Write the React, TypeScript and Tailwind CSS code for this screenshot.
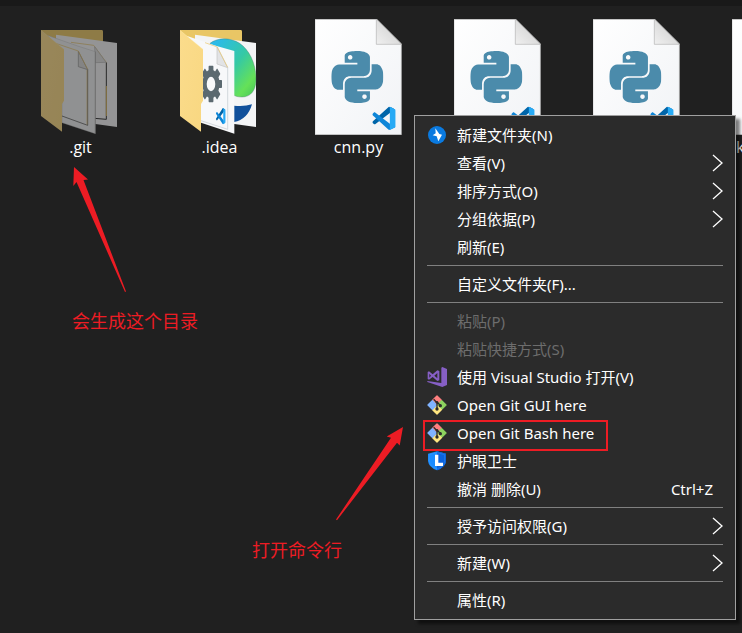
import React from "react";
import { SiPython } from "react-icons/si";

type FileItem = { name: string; kind: "git" | "idea" | "python"; clipped?: boolean };

type MenuEntry =
	| { type: "separator" }
	| {
			type: "item";
			label: string;
			icon?: React.ReactNode;
			shortcut?: string;
			submenu?: boolean;
			disabled?: boolean;
			highlighted?: boolean;
	  };

const VsCodeLogo = (props: React.SVGProps<SVGSVGElement>) => (
	<svg viewBox="0 0 100 100" {...props}>
		<path
			fill="#0065a9"
			d="M96.46 10.8 75.86.88C73.47-.27 70.62.21 68.75 2.08L1.3 63.58c-1.81 1.65-1.81 4.51 0 6.16l5.51 5.01c1.49 1.35 3.72 1.45 5.32.24L93.36 13.36C96.09 11.29 100 13.24 100 16.66v-.24c0-2.4-1.38-4.59-3.54-5.63z"
		/>
		<path
			fill="#0e86d8"
			d="M96.46 89.2 75.86 99.12c-2.39 1.15-5.24.66-7.11-1.21L1.3 36.42c-1.81-1.65-1.81-4.51 0-6.16l5.51-5.01c1.49-1.35 3.72-1.45 5.32-.24l81.23 61.63C96.09 88.71 100 86.76 100 83.34v.24c0 2.4-1.38 4.58-3.54 5.62z"
		/>
		<path
			fill="#27aaf5"
			d="M75.86 99.13c-2.39 1.15-5.24.66-7.11-1.21 2.31 2.31 6.25.67 6.25-2.59V4.67c0-3.26-3.94-4.89-6.25-2.59 1.87-1.87 4.72-2.36 7.11-1.21l20.6 9.9c2.16 1.05 3.54 3.24 3.54 5.64v67.17c0 2.4-1.38 4.59-3.54 5.63z"
		/>
	</svg>
);

const PythonFileIcon = () => (
	<svg viewBox="45 57 261 348" className="h-[116px] w-[87px]" aria-hidden="true">
		<defs>
			<linearGradient id="fold" x1="0" y1="1" x2="1" y2="0">
				<stop offset="0" stopColor="#f0f0f0" />
				<stop offset="1" stopColor="#c9c9c9" />
			</linearGradient>
			<linearGradient id="paper" x1="0" y1="0" x2="1" y2="1">
				<stop offset="0" stopColor="#ffffff" />
				<stop offset="1" stopColor="#f1f3f6" />
			</linearGradient>
		</defs>
		<path d="M45 58H230L304 131V404H45z" fill="url(#paper)" stroke="#c4c4c4" strokeWidth="2" />
		<path d="M229 57V133H304z" fill="url(#fold)" stroke="#b2b2b2" strokeWidth="2" />
		<SiPython x="94" y="153" size={156} color="#4b8bab" />
		<VsCodeLogo x="217" y="320" width="70" height="70" />
	</svg>
);

const FolderBack = () => (
	<>
		<path d="M45 90H228Q231 90 231 95V340H100L45 300z" fill="#e9c665" />
		<path d="M90 104 273 129V381L208 372 90 340z" fill="#f3f4f5" />
	</>
);

const FolderFront = () => (
	<>
		<path d="M45 91 114 148V302L108 312V395L45 348z" fill="url(#flap)" />
		<path d="M45 91 114 148" stroke="#fff0bd" strokeWidth="1" />
	</>
);

const IdeaFolderIcon = () => (
	<svg viewBox="33 57 261 348" className="h-[116px] w-[87px]" aria-hidden="true">
		<defs>
			<linearGradient id="flap" x1="0" y1="0" x2="1" y2="1">
				<stop offset="0" stopColor="#fbdc8c" />
				<stop offset="1" stopColor="#f8d781" />
			</linearGradient>
			<linearGradient id="globe" x1="0" y1="0" x2="1" y2="1">
				<stop offset="0.1" stopColor="#2bbbe8" />
				<stop offset="0.5" stopColor="#35c9a4" />
				<stop offset="0.8" stopColor="#65e158" />
				<stop offset="1" stopColor="#45c45a" />
			</linearGradient>
		</defs>
		<FolderBack />
		<path
			d="M135 130C158 112 196 112 224 130C252 149 272 188 273 234C274 272 257 291 231 291C219 291 212 289 205 285z"
			fill="url(#globe)"
			stroke="#3a6a60"
			strokeWidth="1"
		/>
		<path d="M207 317Q236 321 261 313Q248 359 207 366z" fill="#10509b" />
		<path d="M64 107 155 138 208 153V401L108 368V150z" fill="#f7f8fa" />
		<path d="M188 203V388L108 362" fill="none" stroke="#c3c9cf" strokeWidth="2" />
		<path d="M156 141V192L188 203z" fill="#e2e3e5" stroke="#c2c2c2" strokeWidth="2" />
		<path d="M120 128 157 141 188 202" fill="none" stroke="#e8c467" strokeWidth="2" />
		<g transform="translate(138 252) scale(0.6 1)" fill="#5b6970">
			{[0, 45, 90, 135, 180, 225, 270, 315].map((angle) => (
				<rect key={angle} x="-12" y="-55" width="24" height="28" rx="3" transform={`rotate(${angle})`} />
			))}
			<circle r="32" fill="none" stroke="#5b6970" strokeWidth="21" />
		</g>
		<VsCodeLogo x="153" y="324" width="29" height="49" preserveAspectRatio="none" />
		<FolderFront />
	</svg>
);

const GitFolderIcon = () => (
	<svg viewBox="33 57 261 348" className="h-[116px] w-[87px] opacity-55" aria-hidden="true">
		<FolderBack />
		<path d="M241 187V358L205 355" fill="none" stroke="#2f2f2f" strokeWidth="3" />
		<path d="M135 127 203 136 241 187" fill="none" stroke="#e2bd5f" strokeWidth="2" />
		<path d="M241 258V348" stroke="#e2bd5f" strokeWidth="3" />
		<path d="M206 140 240 187 208 188z" fill="#dcdcdc" stroke="#b0b0b0" strokeWidth="2" />
		<path d="M64 106 155 138 208 155V401L108 368V150z" fill="#eceeef" stroke="#a9a9a9" strokeWidth="1" />
		<path d="M208 155V401" stroke="#9b9b9b" strokeWidth="2" />
		<path d="M185 208V376L108 348" fill="none" stroke="#3a3a3a" strokeWidth="2" />
		<path d="M183 210V374" stroke="#d9bb6d" strokeWidth="2" />
		<path d="M157 154V200L185 209z" fill="#d6d6d6" stroke="#8e8e8e" strokeWidth="2" />
		<path d="M92 131 157 153 185 208" fill="none" stroke="#e2bd5f" strokeWidth="2" />
		<FolderFront />
	</svg>
);

const FlashIcon = () => (
	<svg viewBox="0 0 60 60" className="size-5" aria-hidden="true">
		<circle cx="30" cy="30" r="27" fill="#0a7ae0" />
		<path d="M25 10 37 27 45 29 34 49 29 34 17 31 26 25z" fill="#fff" />
	</svg>
);

const VisualStudioIcon = () => (
	<svg viewBox="36 231 60 60" className="size-5" aria-hidden="true">
		<path d="M79 233 82 231 96 237V285L82 291 37 276V273L79 279z" fill="#865fc5" />
		<path
			d="M38 246 42 244 53 253 67 241 73 243V271L67 273 53 261 42 269 38 267zM43 251V263L48 257zM67 249V265L58 257z"
			fill="#865fc5"
			fillRule="evenodd"
		/>
	</svg>
);

const GitIcon = () => (
	<svg viewBox="0 0 60 60" className="size-5" aria-hidden="true">
		<g strokeWidth="4" strokeLinejoin="round">
			<path d="M30 3 43 16 30 28 17 16z" fill="#ff7f7f" stroke="#ff7f7f" />
			<path d="M44 17 57 30 44 43 32 30z" fill="#8dd35f" stroke="#8dd35f" />
			<path d="M30 32 43 44 30 57 17 44z" fill="#ffe680" stroke="#ffe680" />
			<path d="M16 17 28 30 16 43 3 30z" fill="#80b3ff" stroke="#80b3ff" />
		</g>
		<path d="M20 13 30 23V42M30 22 40 31" fill="none" stroke="#2b2b2b" strokeWidth="4" />
		<circle cx="30" cy="22" r="4" fill="#2b2b2b" />
		<circle cx="40" cy="32" r="5" fill="#2b2b2b" />
		<circle cx="30" cy="42" r="5" fill="#2b2b2b" />
	</svg>
);

const ShieldIcon = () => (
	<svg viewBox="0 0 60 60" className="size-5" aria-hidden="true">
		<path d="M30 1 57 8V30Q55 49 30 58Q5 49 3 30V8z" fill="#1a8bff" />
		<path d="M30 1 57 8V30Q55 49 30 58z" fill="#0b62dc" />
		<path d="M30 5 53 11V30Q51 46 30 54Q9 46 7 30V11z" fill="none" stroke="#49a5ff" strokeWidth="1" />
		<path d="M29 11V40H48" fill="none" stroke="#fff" strokeWidth="10" />
	</svg>
);

const SubmenuArrow = () => (
	<svg viewBox="0 0 11 18" className="h-[18px] w-[11px]" aria-hidden="true">
		<path d="M1 1 10 9 1 17" fill="none" stroke="#fff" strokeWidth="1.3" />
	</svg>
);

const files: FileItem[] = [
	{ name: ".git", kind: "git" },
	{ name: ".idea", kind: "idea" },
	{ name: "cnn.py", kind: "python" },
	{ name: "", kind: "python" },
	{ name: "", kind: "python" },
	{ name: "k", kind: "python", clipped: true },
];

const entries: MenuEntry[] = [
	{ type: "item", label: "新建文件夹(N)", icon: <FlashIcon /> },
	{ type: "item", label: "查看(V)", submenu: true },
	{ type: "item", label: "排序方式(O)", submenu: true },
	{ type: "item", label: "分组依据(P)", submenu: true },
	{ type: "item", label: "刷新(E)" },
	{ type: "separator" },
	{ type: "item", label: "自定义文件夹(F)..." },
	{ type: "separator" },
	{ type: "item", label: "粘贴(P)", disabled: true },
	{ type: "item", label: "粘贴快捷方式(S)", disabled: true },
	{ type: "item", label: "使用 Visual Studio 打开(V)", icon: <VisualStudioIcon /> },
	{ type: "item", label: "Open Git GUI here", icon: <GitIcon /> },
	{ type: "item", label: "Open Git Bash here", icon: <GitIcon />, highlighted: true },
	{ type: "item", label: "护眼卫士", icon: <ShieldIcon /> },
	{ type: "item", label: "撤消 删除(U)", shortcut: "Ctrl+Z" },
	{ type: "separator" },
	{ type: "item", label: "授予访问权限(G)", submenu: true },
	{ type: "separator" },
	{ type: "item", label: "新建(W)", submenu: true },
	{ type: "separator" },
	{ type: "item", label: "属性(R)" },
];

const FileGrid = () => (
	<ul className="flex pl-[11px] pt-[13px]">
		{files.map((file, index) => (
			<li key={index} className="flex w-[139px] shrink-0 flex-col items-center">
				{file.kind === "git" && <GitFolderIcon />}
				{file.kind === "idea" && <IdeaFolderIcon />}
				{file.kind === "python" && <PythonFileIcon />}
				<span className={`h-6 text-base leading-6 text-white ${file.clipped ? "w-full pl-[30px]" : ""}`}>
					{file.name}
				</span>
			</li>
		))}
	</ul>
);

const ContextMenu = () => (
	<div
		role="menu"
		className="absolute left-[414px] top-[115px] w-[322px] border border-[#a0a0a0] bg-[#2b2b2b] py-[5px] font-['Noto_Sans','Noto_Sans_CJK_SC',sans-serif] shadow-[4px_4px_3px_rgba(0,0,0,0.5)]"
	>
		{entries.map((entry, index) =>
			entry.type === "separator" ? (
				<div key={index} role="separator" className="mx-3 my-1 h-px bg-[#808080]" />
			) : (
				<button
					key={index}
					type="button"
					role="menuitem"
					disabled={entry.disabled}
					className="relative flex h-7 w-full items-center px-3 text-left text-[15px] text-white disabled:text-[#6d6d6d]"
				>
					<span className="mr-[10px] w-5 shrink-0">{entry.icon}</span>
					<span className="flex-1 whitespace-nowrap">{entry.label}</span>
					{entry.shortcut && <span className="pr-[10px]">{entry.shortcut}</span>}
					{entry.submenu && <SubmenuArrow />}
					{entry.highlighted && (
						<span className="absolute left-2 top-px h-[31px] w-[185px] border-2 border-[#ed1c24]" />
					)}
				</button>
			),
		)}
	</div>
);

const Annotations = () => (
	<>
		<svg className="absolute left-[70px] top-[164px] h-[130px] w-[60px]" viewBox="70 164 60 130" aria-hidden="true">
			<path d="M74 167 88 179.500 83.500 180 126 291.500 125 292 76.500 182 73.300 186z" fill="#ed1c24" />
		</svg>
		<p className="absolute left-[72px] top-[308px] text-lg leading-[26px] text-[#ed1c24]">会生成这个目录</p>
		<svg className="absolute left-[334px] top-[424px] h-[98px] w-[72px]" viewBox="334 424 72 98" aria-hidden="true">
			<path d="M403 427 386.700 436.500 391 437.700 336 519.500 337 520.200 397 442.700 399.700 445.500z" fill="#ed1c24" />
		</svg>
		<p className="absolute left-[252px] top-[537px] text-lg leading-[26px] text-[#ed1c24]">打开命令行</p>
	</>
);

const App = () => {
	return (
		<main className="relative min-h-screen overflow-hidden border-t-[6px] border-[#191919] bg-[#202020] font-['Open_Sans','Noto_Sans_CJK_SC',sans-serif]">
			<FileGrid />
			<div className="absolute inset-x-0 -top-[6px]">
				<Annotations />
				<ContextMenu />
			</div>
		</main>
	);
};

export default App;
